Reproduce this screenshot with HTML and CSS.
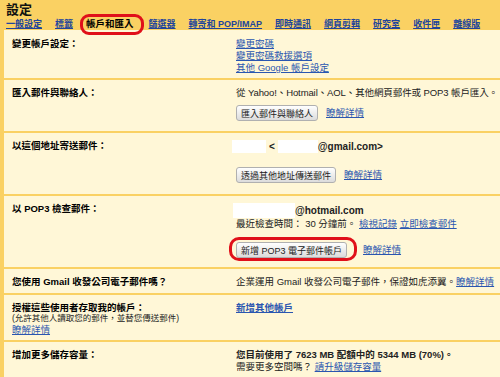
FILE: index.html
```html
<!DOCTYPE html>
<html lang="zh-Hant">
<head>
  <meta charset="UTF-8" />
  <meta name="viewport" content="width=device-width, initial-scale=1.0" />
  <title>設定 - 帳戶和匯入</title>
  <link rel="stylesheet" href="styles.css">
</head>
<body>
  <div class="settings">
    <div class="top">
      <h1>設定</h1>
      <nav class="tabs">
        <a href="#">一般設定</a>
        <a href="#">標籤</a>
        <span class="tab-current marked">帳戶和匯入</span>
        <a href="#">篩選器</a>
        <a href="#">轉寄和 POP/IMAP</a>
        <a href="#">即時通訊</a>
        <a href="#">網頁剪輯</a>
        <a href="#">研究室</a>
        <a href="#">收件匣</a>
        <a href="#">離線版</a>
      </nav>
    </div>

    <div class="panel">
      <div class="row row-account">
        <div class="label">變更帳戶設定：</div>
        <div class="value">
          <a href="#">變更密碼</a><br>
          <a href="#">變更密碼救援選項</a><br>
          <a href="#">其他 Google 帳戶設定</a>
        </div>
      </div>

      <div class="row row-import">
        <div class="label">匯入郵件與聯絡人：</div>
        <div class="value">
          <div class="narrow">從 Yahoo!、Hotmail、AOL、其他網頁郵件或 POP3 帳戶匯入。</div>
          <div class="actions">
            <button>匯入郵件與聯絡人</button>
            <a href="#">瞭解詳情</a>
          </div>
        </div>
      </div>

      <div class="row row-sendas">
        <div class="label">以這個地址寄送郵件：</div>
        <div class="value">
          <div class="address">
            <span class="blank blank-name"></span>
            <b>&lt;</b>
            <span class="blank blank-user"></span><b>@gmail.com&gt;</b>
          </div>
          <div class="actions">
            <button>透過其他地址傳送郵件</button>
            <a href="#">瞭解詳情</a>
          </div>
        </div>
      </div>

      <div class="row row-pop">
        <div class="label">以 POP3 檢查郵件：</div>
        <div class="value">
          <div class="address">
            <span class="blank blank-pop"></span><b>@hotmail.com</b>
          </div>
          <div>最近檢查時間： 30 分鐘前。 <a href="#">檢視記錄</a> <a href="#">立即檢查郵件</a></div>
          <div class="actions">
            <span class="marked marked-btn"><button>新增 POP3 電子郵件帳戶</button></span>
            <a href="#">瞭解詳情</a>
          </div>
        </div>
      </div>

      <div class="row row-apps">
        <div class="label">您使用 Gmail 收發公司電子郵件嗎？</div>
        <div class="value">企業運用 Gmail 收發公司電子郵件，保證如虎添翼。<a href="#">瞭解詳情</a></div>
      </div>

      <div class="row row-grant">
        <div class="label">
          授權這些使用者存取我的帳戶：
          <span class="note">(允許其他人讀取您的郵件，並替您傳送郵件)</span>
          <a href="#">瞭解詳情</a>
        </div>
        <div class="value"><a href="#" class="strong">新增其他帳戶</a></div>
      </div>

      <div class="row row-storage">
        <div class="label">增加更多儲存容量：</div>
        <div class="value">
          <b>您目前使用了 7623 MB 配額中的 5344 MB (70%)。</b><br>
          需要更多空間嗎？ <a href="#">請升級儲存容量</a>
        </div>
      </div>
    </div>
  </div>
</body>
</html>
```

FILE: styles.css
```css
body {
  margin: 0;
  font-family: 'Liberation Sans', 'Noto Sans CJK TC', sans-serif;
  font-size: 9.5px;
  line-height: 12px;
  color: #222;
  background-color: #fff7d7;
}
a {
  color: #2a56b0;
}
.settings {
  width: 500px;
}
.top {
  background-color: #fad163;
  height: 30px;
  padding: 0 6px;
  box-sizing: border-box;
}
h1 {
  margin: 0;
  padding-top: 3px;
  font-size: 13px;
  line-height: 13px;
  color: #111;
}
.tabs {
  display: flex;
  gap: 13px;
  margin-top: 2px;
  font-size: 9px;
  font-weight: bold;
  white-space: nowrap;
}
.tabs a {
  color: #20449c;
}
.tab-current {
  color: #000;
  font-size: 9.5px;
  margin-right: 2px;
}
.marked {
  position: relative;
}
.marked::after {
  content: '';
  position: absolute;
  top: -4px;
  bottom: -5px;
  left: -6px;
  right: -10px;
  border: 3px solid #e0101a;
  border-radius: 9px;
}
.marked-btn {
  display: inline-block;
  margin-right: 8px;
}
.marked-btn::after {
  top: -5px;
  bottom: -3px;
  left: -7px;
  right: -10px;
  border-radius: 10px;
}
.panel {
  border-left: 4px solid #fad163;
  border-bottom: 2px solid #fad163;
}
.row {
  display: grid;
  grid-template-columns: 232px 1fr;
  padding: 7px 0 5px;
  border-top: 2px solid #fad163;
}
.row-account {
  border-top: none;
  padding-top: 8px;
  padding-bottom: 4px;
}
.label {
  padding-left: 8px;
  font-weight: bold;
  font-size: 9.5px;
  color: #000;
}
.label .note {
  display: block;
  font-weight: normal;
  font-size: 8.5px;
  color: #222;
}
.label a {
  font-weight: normal;
}
.row-grant .label {
  line-height: 11px;
}
.value {
  white-space: nowrap;
}
.narrow {
  letter-spacing: -0.1px;
}
.actions {
  display: flex;
  align-items: center;
  gap: 8px;
  margin-top: 6px;
  margin-bottom: 5px;
}
.row-sendas .actions {
  margin-top: 14px;
  margin-bottom: 6px;
}
.row-pop .actions {
  margin-top: 12px;
  margin-bottom: 4px;
}
button {
  height: 16px;
  padding: 0 4px;
  font-family: 'Liberation Sans', 'Noto Sans CJK TC', sans-serif;
  font-size: 9px;
  color: #222;
  background: linear-gradient(#ffffff, #dcdcdc);
  border: 1px solid #b0b0b0;
  border-radius: 3px;
}
.address {
  display: flex;
  align-items: center;
  font-size: 10px;
  color: #222;
}
.blank {
  display: inline-block;
  height: 13px;
  background-color: #ffffff;
}
.blank-name {
  width: 34px;
  margin-left: -4px;
  margin-right: 3px;
}
.blank-user {
  width: 40px;
  margin-left: 3px;
}
.blank-pop {
  width: 62px;
  height: 15px;
  margin-left: -3px;
}
.strong {
  font-weight: bold;
}
```
